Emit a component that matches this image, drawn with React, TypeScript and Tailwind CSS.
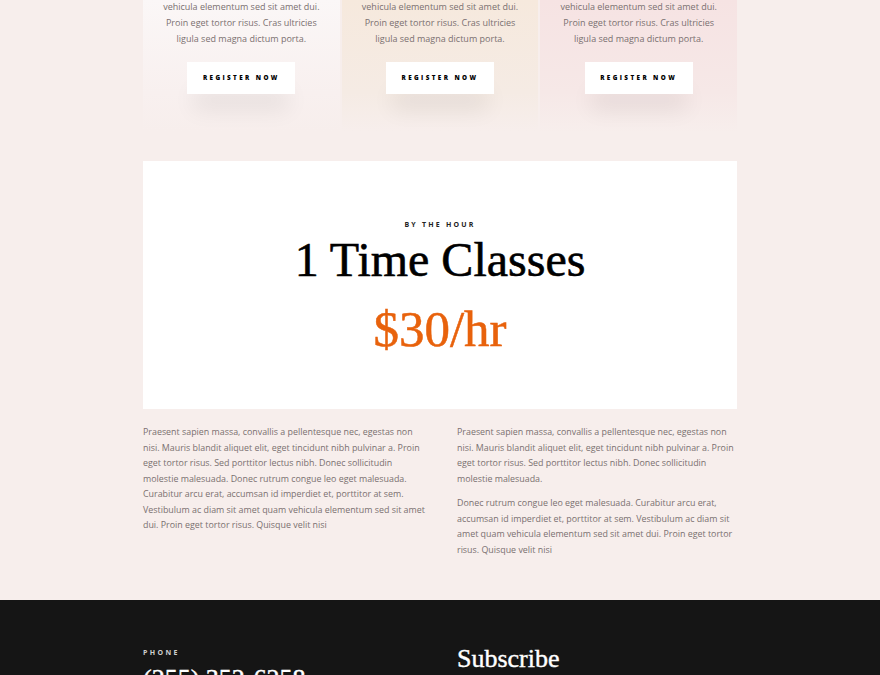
const cards = [
  { bg: "bg-[linear-gradient(180deg,#fbf7f7_0%,#f8f0ef_70%,rgba(247,237,235,0)_100%)]" },
  { bg: "bg-[linear-gradient(180deg,#f6e9dd_0%,#f5ebe4_70%,rgba(247,237,235,0)_100%)]" },
  { bg: "bg-[linear-gradient(180deg,#f6e3e3_0%,#f6e8e7_70%,rgba(247,237,235,0)_100%)]" },
]

const sans = "font-['Open_Sans',sans-serif]"
const serif = "font-['Liberation_Serif',serif]"

const PriceCard = ({ bg }: { bg: string }) => (
  <div className={`${bg} h-[132px] flex flex-col items-center`}>
    <p className={`${sans} text-[9px] leading-[16px] text-[#7a7070] text-center -mt-[1px]`}>
      vehicula elementum sed sit amet dui.
      <br />
      Proin eget tortor risus. Cras ultricies
      <br />
      ligula sed magna dictum porta.
    </p>
    <button className={`${sans} mt-[15px] w-[108px] h-[32px] bg-white text-[6.3px] font-extrabold tracking-[2.4px] text-black shadow-[0_22px_22px_-6px_rgba(0,0,0,0.07)]`}>
      REGISTER NOW
    </button>
  </div>
)

export default function App() {
  return (
    <div className="w-[880px] h-[675px] overflow-hidden bg-[#f7eeec]">
      <div className="mx-auto w-[594px]">
        <div className="grid grid-cols-3 gap-[2px]">
          {cards.map((c, i) => (
            <PriceCard key={i} bg={c.bg} />
          ))}
        </div>

        <div className="mt-[29px] h-[248px] bg-white flex flex-col items-center pt-[59px]">
          <p className={`${sans} text-[7px] font-bold tracking-[2.2px] text-[#222] leading-[10px]`}>BY THE HOUR</p>
          <h2 className={`${serif} text-[48px] leading-[52px] text-black mt-[4px] [-webkit-text-stroke:0.6px_black]`}>1 Time Classes</h2>
          <p className={`${serif} text-[51px] leading-[56px] text-[#e8620c] mt-[15px] [-webkit-text-stroke:0.5px_#e8620c]`}>$30/hr</p>
        </div>

        <div className={`${sans} grid grid-cols-[286px_1fr] gap-[28px] mt-[15px] text-[8.9px] leading-[15.5px] text-[#7a7070]`}>
          <p>
            Praesent sapien massa, convallis a pellentesque nec, egestas non nisi. Mauris blandit aliquet elit, eget tincidunt nibh pulvinar a. Proin eget tortor risus. Sed porttitor lectus nibh. Donec sollicitudin molestie malesuada. Donec rutrum congue leo eget malesuada. Curabitur arcu erat, accumsan id imperdiet et, porttitor at sem. Vestibulum ac diam sit amet quam vehicula elementum sed sit amet dui. Proin eget tortor risus. Quisque velit nisi
          </p>
          <div className="flex flex-col gap-[9px]">
            <p>
              Praesent sapien massa, convallis a pellentesque nec, egestas non nisi. Mauris blandit aliquet elit, eget tincidunt nibh pulvinar a. Proin eget tortor risus. Sed porttitor lectus nibh. Donec sollicitudin molestie malesuada.
            </p>
            <p>
              Donec rutrum congue leo eget malesuada. Curabitur arcu erat, accumsan id imperdiet et, porttitor at sem. Vestibulum ac diam sit amet quam vehicula elementum sed sit amet dui. Proin eget tortor risus. Quisque velit nisi
            </p>
          </div>
        </div>
      </div>

      <footer className="mt-[43px] bg-[#151515] h-[200px]">
        <div className="mx-auto w-[594px] grid grid-cols-[286px_1fr] gap-[28px] pt-[48px]">
          <div>
            <p className={`${sans} text-[7px] font-bold tracking-[2.4px] text-[#cfcfcf] leading-[10px]`}>PHONE</p>
            <p className={`${serif} text-[26px] leading-[30px] text-white mt-[6px] [-webkit-text-stroke:0.4px_white]`}>(255) 352-6258</p>
          </div>
          <div>
            <h3 className={`${serif} text-[26px] leading-[30px] text-white -mt-[4px] [-webkit-text-stroke:0.4px_white]`}>Subscribe</h3>
          </div>
        </div>
      </footer>
    </div>
  )
}
